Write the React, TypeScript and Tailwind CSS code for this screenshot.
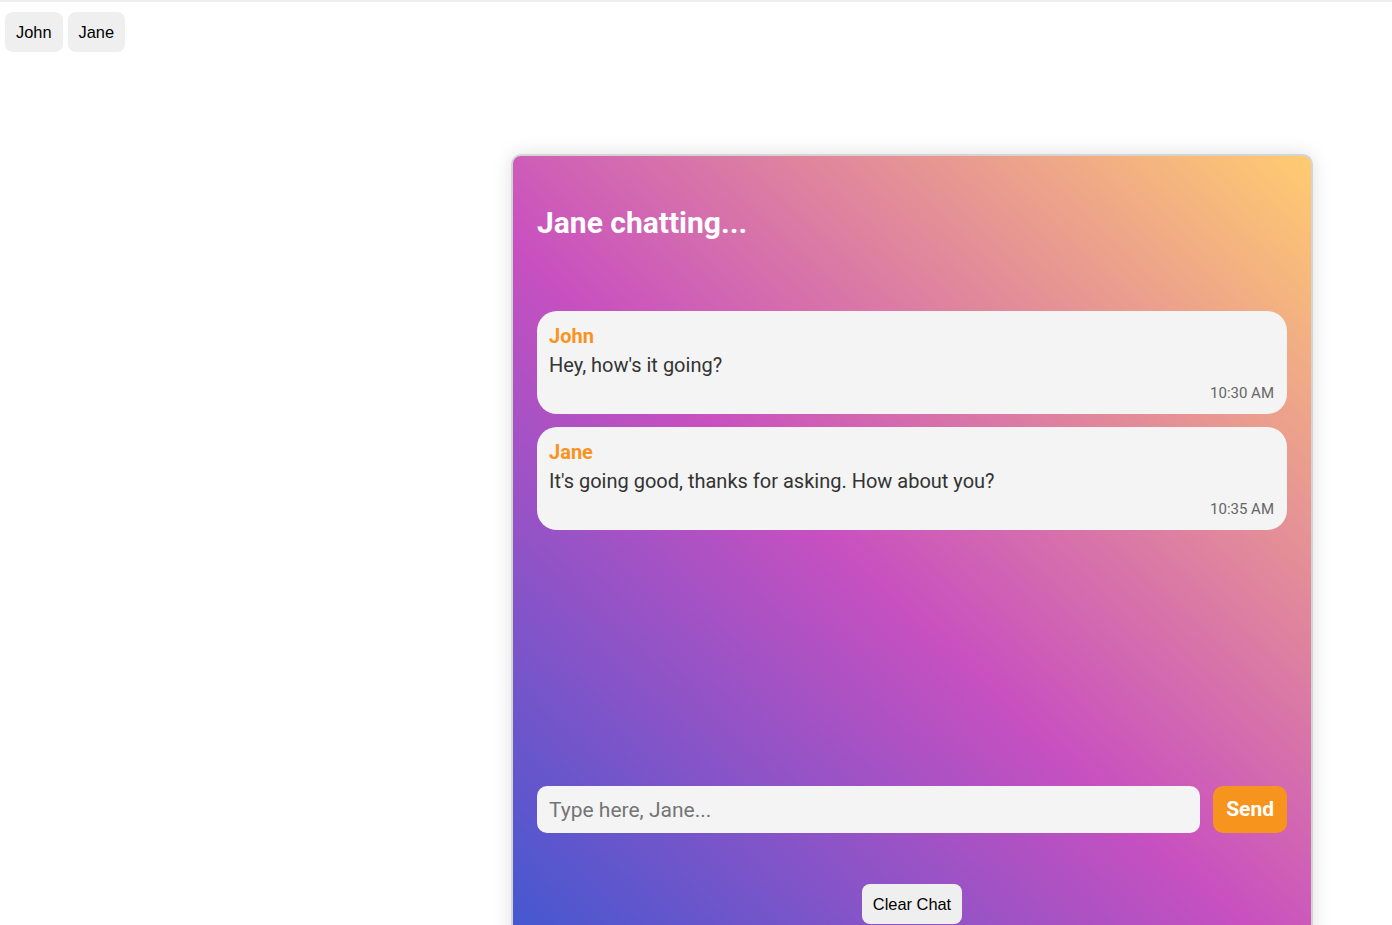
import React, { useState } from 'react';

type Message = { id: number; author: string; text: string; time: string };

const initialMessages: Message[] = [
  { id: 1, author: 'John', text: "Hey, how's it going?", time: '10:30 AM' },
  { id: 2, author: 'Jane', text: "It's going good, thanks for asking. How about you?", time: '10:35 AM' },
];

function MessageBubble({ message }: { message: Message }) {
  return (
    <div className="rounded-[20px] bg-[#f4f4f4] pb-3 pl-3 pr-[13px] pt-[13px]">
      <div className="text-[20px] font-bold leading-[24px] text-[#f7931e]">{message.author}</div>
      <div className="mt-[2px] text-[20px] leading-[30px] text-[#333]">{message.text}</div>
      <div className="mt-[4px] text-right text-[15px] leading-[18px] text-[#666]">{message.time}</div>
    </div>
  );
}

export default function App() {
  const [user, setUser] = useState('Jane');
  const [messages, setMessages] = useState<Message[]>(initialMessages);
  const [draft, setDraft] = useState('');

  const send = () => {
    if (!draft.trim()) return;
    setMessages([...messages, { id: Date.now(), author: user, text: draft, time: '10:40 AM' }]);
    setDraft('');
  };

  return (
    <div className="min-h-[925px] border-t-2 border-[#eeeeee] bg-white font-['Roboto',sans-serif]">
      <div className="flex gap-[5px] px-[5px] pt-[10px]">
        {['John', 'Jane'].map((name) => (
          <button
            key={name}
            onClick={() => setUser(name)}
            className="h-10 rounded-lg bg-[#efefef] px-[11px] font-['Liberation_Sans',Arial,sans-serif] text-[16.4px] text-black"
          >
            {name}
          </button>
        ))}
      </div>

      <div className="ml-[511px] mt-[102px] w-[802px] overflow-hidden rounded-[10px] border-2 border-[#d4d4d4] bg-[linear-gradient(43deg,#4158D0_0%,#C850C0_46%,#FFCC70_100%)] px-6 pb-6 pt-[49px] shadow-[0_0_20px_rgba(0,0,0,0.12)]">
        <h2 className="text-[30px] font-bold leading-[36px] text-white">{user} chatting...</h2>

        <div className="mt-[70px] flex h-[450px] flex-col gap-[13px] overflow-y-auto">
          {messages.map((m) => (
            <MessageBubble key={m.id} message={m} />
          ))}
        </div>

        <div className="mt-[25px] flex items-center gap-[13px]">
          <input
            value={draft}
            onChange={(e) => setDraft(e.target.value)}
            placeholder={`Type here, ${user}...`}
            className="h-[47px] flex-1 rounded-[10px] bg-[#f4f4f4] px-3 font-['Roboto',sans-serif] text-[21px] text-[#333] outline-none placeholder:text-[#757575]"
          />
          <button
            onClick={send}
            className="h-[47px] rounded-[10px] bg-[#f7941d] px-[13px] text-[21px] font-bold text-white"
          >
            Send
          </button>
        </div>

        <div className="mt-[51px] flex justify-center">
          <button
            onClick={() => setMessages([])}
            className="h-10 rounded-lg bg-[#efefef] px-[11px] font-['Liberation_Sans',Arial,sans-serif] text-[16.4px] text-black"
          >
            Clear Chat
          </button>
        </div>
      </div>
    </div>
  );
}
